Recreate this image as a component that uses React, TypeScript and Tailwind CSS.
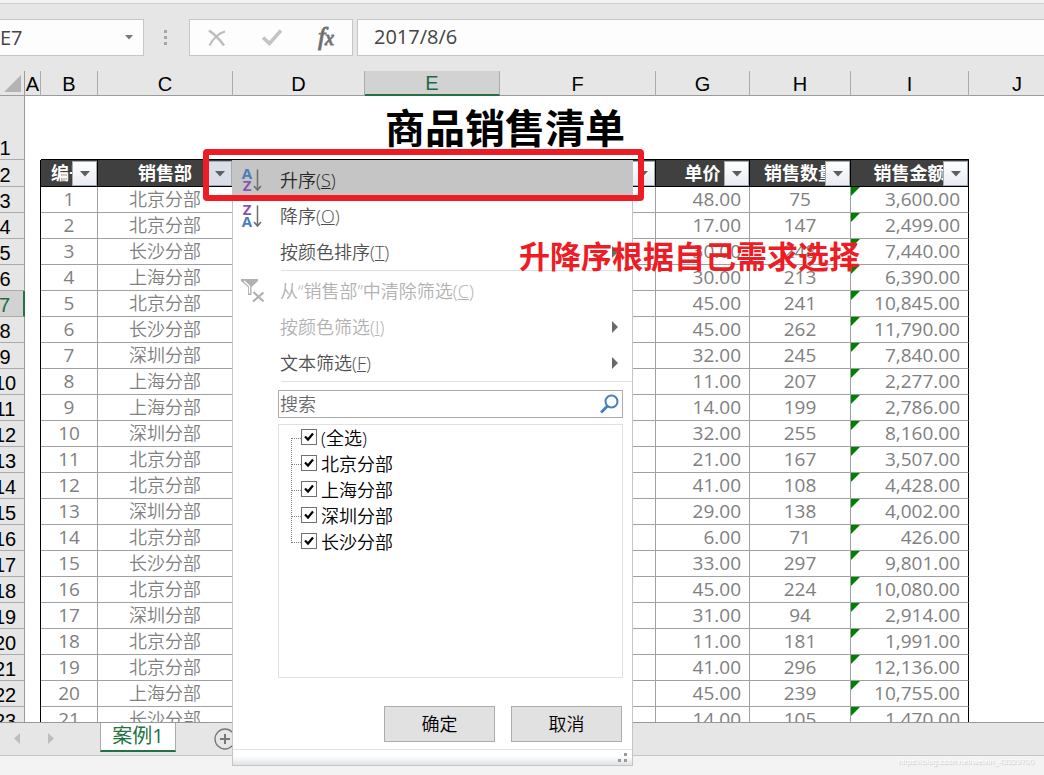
import { useState } from "react";
import type { ReactNode } from "react";
import clsx from "clsx";

type Row = {
  id: number;
  branch: string;
  price: string;
  qty: number;
  total: string;
};

const rows: Row[] = [
  { id: 1, branch: "北京分部", price: "48.00", qty: 75, total: "3,600.00" },
  { id: 2, branch: "北京分部", price: "17.00", qty: 147, total: "2,499.00" },
  { id: 3, branch: "长沙分部", price: "30.00", qty: 248, total: "7,440.00" },
  { id: 4, branch: "上海分部", price: "30.00", qty: 213, total: "6,390.00" },
  { id: 5, branch: "北京分部", price: "45.00", qty: 241, total: "10,845.00" },
  { id: 6, branch: "长沙分部", price: "45.00", qty: 262, total: "11,790.00" },
  { id: 7, branch: "深圳分部", price: "32.00", qty: 245, total: "7,840.00" },
  { id: 8, branch: "上海分部", price: "11.00", qty: 207, total: "2,277.00" },
  { id: 9, branch: "上海分部", price: "14.00", qty: 199, total: "2,786.00" },
  { id: 10, branch: "深圳分部", price: "32.00", qty: 255, total: "8,160.00" },
  { id: 11, branch: "北京分部", price: "21.00", qty: 167, total: "3,507.00" },
  { id: 12, branch: "北京分部", price: "41.00", qty: 108, total: "4,428.00" },
  { id: 13, branch: "深圳分部", price: "29.00", qty: 138, total: "4,002.00" },
  { id: 14, branch: "北京分部", price: "6.00", qty: 71, total: "426.00" },
  { id: 15, branch: "长沙分部", price: "33.00", qty: 297, total: "9,801.00" },
  { id: 16, branch: "北京分部", price: "45.00", qty: 224, total: "10,080.00" },
  { id: 17, branch: "深圳分部", price: "31.00", qty: 94, total: "2,914.00" },
  { id: 18, branch: "北京分部", price: "11.00", qty: 181, total: "1,991.00" },
  { id: 19, branch: "北京分部", price: "41.00", qty: 296, total: "12,136.00" },
  { id: 20, branch: "上海分部", price: "45.00", qty: 239, total: "10,755.00" },
  { id: 21, branch: "长沙分部", price: "14.00", qty: 105, total: "1,470.00" },
];

const columns = ["A", "B", "C", "D", "E", "F", "G", "H", "I", "J"];
const headers = ["编号", "销售部", "", "", "", "单价", "销售数量", "销售金额"];
const options = ["(全选)", "北京分部", "上海分部", "深圳分部", "长沙分部"];

const cell = "border-r border-b border-[#a0a0a0] p-0 pb-px";

function FilterButton({ label, active, onClick }: { label: string; active?: boolean; onClick?: () => void }) {
  return (
    <button
      type="button"
      aria-label={`筛选 ${label}`}
      onClick={onClick}
      className={clsx(
        "absolute right-0 top-px flex h-[25px] w-[25px] items-center justify-center border border-[#a3abb5]",
        active ? "bg-[#d9dee8]" : "bg-linear-to-b from-white to-[#e9ecf2]"
      )}
    >
      <svg width="10" height="6" viewBox="0 0 10 6">
        <path d="M0 0h10L5 5.5z" fill="#5f5f5f" />
      </svg>
    </button>
  );
}

function RowNumber({ n }: { n: number }) {
  return (
    <th
      scope="row"
      className={clsx(
        "h-[26px] border-b border-b-[#ababab] p-0 pt-[3px] font-['Liberation_Sans',sans-serif] text-xl leading-[22px] font-normal",
        n === 1 && "align-bottom",
        n === 7
          ? "border-r-2 border-r-[#217346] bg-[#d2d2d2] text-[#1e6b41]"
          : "border-r border-r-[#9b9b9b] bg-[#e6e6e6] text-black"
      )}
    >
      {n}
    </th>
  );
}

function SortIcon({ first, second }: { first: "A" | "Z"; second: "A" | "Z" }) {
  const color = { A: "#4a7ebb", Z: "#8a55b0" };
  return (
    <svg width="22" height="26" viewBox="0 0 22 26" fontFamily="Open Sans, sans-serif" fontWeight="700" fontSize="15">
      <text x="6" y="12" textAnchor="middle" fill={color[first]}>{first}</text>
      <text x="6" y="24" textAnchor="middle" fill={color[second]}>{second}</text>
      <path d="M16.500 2.500v20M13 19l3.500 4 3.500-4" fill="none" stroke="#6d6d6d" strokeWidth="1.500" />
    </svg>
  );
}

function ClearFilterIcon() {
  return (
    <svg width="24" height="24" viewBox="0 0 24 24">
      <path d="M0 0h17v2l-6.500 6v8H7V8L0 2z" fill="#b1b1b1" />
      <path d="M3 2l5.500 5v7.500" stroke="#fff" strokeWidth="1.200" fill="none" />
      <path d="M12.500 13l10 9.500M22.500 13.500l-10.500 9" stroke="#b1b1b1" strokeWidth="2.200" fill="none" />
    </svg>
  );
}

function MenuItem({
  icon,
  children,
  submenu,
  disabled,
  highlighted,
}: {
  icon?: ReactNode;
  children: ReactNode;
  submenu?: boolean;
  disabled?: boolean;
  highlighted?: boolean;
}) {
  return (
    <button
      type="button"
      role="menuitem"
      disabled={disabled}
      className={clsx(
        "flex w-full items-center pr-3.5 text-left text-lg leading-6",
        highlighted ? "h-[37px] bg-[#c5c5c5] text-[#262626]" : "h-9",
        !highlighted && (disabled ? "text-[#b1b1b1]" : "text-[#505050]")
      )}
    >
      <span className="flex w-[47px] shrink-0 pl-2">{icon}</span>
      <span className="flex-1">{children}</span>
      {submenu && (
        <svg width="6" height="12" viewBox="0 0 6 12">
          <path d="M0 0l6 6-6 6z" fill="#6a6a6a" />
        </svg>
      )}
    </button>
  );
}

function FilterMenu({ onClose }: { onClose: () => void }) {
  const [query, setQuery] = useState("");
  const [checked, setChecked] = useState<string[]>(options);

  const toggle = (name: string) => {
    if (name === options[0]) {
      setChecked(checked.includes(name) ? [] : options);
      return;
    }
    setChecked(checked.includes(name) ? checked.filter((c) => c !== name && c !== options[0]) : [...checked, name]);
  };

  return (
    <div className="absolute top-[160px] left-[232px] z-10 w-[401px] border border-[#c3c4c6] bg-white font-[350]">
      <div role="menu">
        <MenuItem highlighted icon={<SortIcon first="A" second="Z" />}>
          升序(<u>S</u>)
        </MenuItem>
        <MenuItem icon={<SortIcon first="Z" second="A" />}>
          降序(<u>O</u>)
        </MenuItem>
        <MenuItem submenu>
          按颜色排序(<u>T</u>)
        </MenuItem>
        <hr className="mb-0.5 ml-12 border-[#e0e1e3]" />
        <MenuItem disabled icon={<ClearFilterIcon />}>
          从“销售部”中清除筛选(<u>C</u>)
        </MenuItem>
        <MenuItem disabled submenu>
          按颜色筛选(<u>I</u>)
        </MenuItem>
        <MenuItem submenu>
          文本筛选(<u>F</u>)
        </MenuItem>
        <hr className="ml-12 border-[#e0e1e3]" />
      </div>

      <div className="mt-2 mr-[9px] ml-[45px] flex h-7 items-center border border-[#ababab] pr-[3px]">
        <input
          type="text"
          aria-label="搜索"
          placeholder="搜索"
          value={query}
          onChange={(e) => setQuery(e.target.value)}
          className="min-w-0 flex-1 pl-px text-lg leading-6 outline-none placeholder:text-[#6a6a6a]"
        />
        <svg width="19" height="20" viewBox="0 0 19 20" fill="none" stroke="#4a7ebb">
          <circle cx="11.500" cy="7.500" r="6" strokeWidth="2" />
          <path d="M7.500 12L1 18.500" strokeWidth="3" />
        </svg>
      </div>

      <div className="mt-1.5 mr-[9px] ml-[45px] h-[254px] border border-[#e0e1e4]">
        <ul className="relative pl-[13px]">
          <li aria-hidden="true" className="absolute top-[13px] left-3 h-[105px] border-l border-dotted border-[#808080]" />
          {options.map((name) => (
            <li key={name}>
              <label className="flex h-[26px] items-center text-lg leading-6 text-black">
                <span className="w-[9px] border-t border-dotted border-[#808080]" />
                <span className="mr-1 mb-0.5 grid h-4 w-4 place-items-center">
                  <input
                    type="checkbox"
                    checked={checked.includes(name)}
                    onChange={() => toggle(name)}
                    className="peer col-start-1 row-start-1 h-4 w-4 appearance-none border border-[#707070] bg-white"
                  />
                  <svg
                    width="10"
                    height="10"
                    viewBox="0 0 10 10"
                    className="pointer-events-none invisible col-start-1 row-start-1 peer-checked:visible"
                  >
                    <path d="M1 4.500L4 7.500 9 1.500" fill="none" stroke="#000" strokeWidth="2.200" />
                  </svg>
                </span>
                {name}
              </label>
            </li>
          ))}
        </ul>
      </div>

      <div className="mt-7 mr-2.5 flex justify-end gap-4">
        <button type="button" onClick={onClose} className="h-9 w-[111px] border border-[#adadad] bg-[#e1e1e1] text-lg leading-6 text-black">
          确定
        </button>
        <button type="button" onClick={onClose} className="h-9 w-[111px] border border-[#adadad] bg-[#e1e1e1] text-lg leading-6 text-black">
          取消
        </button>
      </div>

      <div className="mt-[7px] flex h-4 items-center justify-end border-t border-[#dbe5ee] bg-linear-to-b from-white from-40% to-[#dfe3e6] pr-1">
        <svg width="10" height="10" viewBox="0 0 10 10" fill="#9a9a9a">
          <path d="M6 0h3v3H6zM0 6h3v3H0zM6 6h3v3H6z" />
        </svg>
      </div>
    </div>
  );
}

function FormulaBar() {
  return (
    <div className="flex items-center bg-[#e6e6e6] py-[15px] text-xl text-[#444]">
      <div className="flex h-[37px] w-36 items-center border border-l-0 border-[#c6c6c6] bg-[#fdfdfd] pr-2.5">
        <input aria-label="名称框" defaultValue="E7" className="min-w-0 flex-1 outline-none" />
        <svg width="8" height="5" viewBox="0 0 8 5">
          <path d="M0 0h8L4 4.500z" fill="#777" />
        </svg>
      </div>
      <svg className="mx-5 shrink-0" width="5" height="16" viewBox="0 0 5 16" fill="#a6a6a6">
        <path d="M0 0h3v3H0zM0 6h3v3H0zM0 12h3v3H0z" />
      </svg>
      <div className="flex h-[37px] w-[164px] shrink-0 items-center justify-between border border-[#c6c6c6] bg-[#fdfdfd] px-[18px]">
        <button type="button" aria-label="取消输入">
          <svg width="18" height="18" viewBox="0 0 18 18" fill="none" stroke="#bdbdbd">
            <path d="M1 1.500C6 5 12 11 16 16.500" strokeWidth="2.600" />
            <path d="M17 2.500C11 4 5 10 1.500 16.500" strokeWidth="2" />
          </svg>
        </button>
        <button type="button" aria-label="输入">
          <svg width="20" height="17" viewBox="0 0 20 17" fill="none" stroke="#c4c4c4">
            <path d="M1 8.500l6.500 6L19 1.500" strokeWidth="3.600" />
          </svg>
        </button>
        <button
          type="button"
          aria-label="插入函数"
          className="pb-0.5 font-['Liberation_Serif',serif] text-[26px] leading-8 text-[#666] italic [-webkit-text-stroke:1px_#777]"
        >
          f<span className="text-xl">x</span>
        </button>
      </div>
      <input
        aria-label="编辑栏"
        defaultValue="2017/8/6"
        className="ml-1 h-[37px] min-w-0 flex-1 border border-r-0 border-[#c6c6c6] bg-[#fdfdfd] pb-0.5 pl-4 outline-none"
      />
    </div>
  );
}

function Sheet({ onFilter }: { onFilter: () => void }) {
  return (
    <div className="min-h-0 flex-1 overflow-hidden border-b border-[#999] bg-white">
      <table className="-ml-[14px] w-[calc(100%+14px)] table-fixed border-separate border-spacing-0">
        <colgroup>
          <col className="w-[39px]" />
          <col className="w-[16px]" />
          <col className="w-[57px]" />
          <col className="w-[135px]" />
          <col className="w-[132px]" />
          <col className="w-[135px]" />
          <col className="w-[156px]" />
          <col className="w-[94px]" />
          <col className="w-[101px]" />
          <col className="w-[118px]" />
          <col className="w-[97px]" />
          <col />
        </colgroup>
        <thead>
          <tr className="bg-[#e6e6e6] font-['Liberation_Sans',sans-serif] text-xl leading-[22px]">
            <th aria-label="全选" className="h-[25px] border-r border-b border-[#9b9b9b] p-0">
              <svg className="mr-[3px] ml-auto" width="17" height="17" viewBox="0 0 17 17">
                <path d="M17 0v17H0z" fill="#b4b4b4" />
              </svg>
            </th>
            {columns.map((c) => (
              <th
                key={c}
                scope="col"
                className={clsx(
                  "h-[25px] border-r border-r-[#ababab] p-0 pt-px font-normal",
                  c === "E"
                    ? "border-b-2 border-b-[#217346] bg-[#d2d2d2] text-[#1e6b41]"
                    : "border-b border-b-[#9b9b9b] text-black"
                )}
              >
                {c}
              </th>
            ))}
            <th className="border-b border-[#9b9b9b] p-0" />
          </tr>
        </thead>
        <tbody className="text-lg leading-6 text-[#808080]">
          <tr className="h-16">
            <RowNumber n={1} />
            <td />
            <td colSpan={8} className="border-b border-black p-0 text-center text-[40px] leading-[60px] font-bold text-black">
              商品销售清单
            </td>
          </tr>
          <tr>
            <RowNumber n={2} />
            <td className="border-r border-black p-0" />
            {headers.map((h, i) => (
              <th key={i} scope="col" className="h-[27px] border-r border-b border-black bg-[#404040] p-0 font-bold text-white">
                <div className="relative h-[26px] overflow-hidden leading-[26px] whitespace-nowrap">
                  {h}
                  <FilterButton label={h} active={i === 1} onClick={i === 1 ? onFilter : undefined} />
                </div>
              </th>
            ))}
          </tr>
          {rows.map((r) => (
            <tr key={r.id}>
              <RowNumber n={r.id + 2} />
              <td className="border-r border-black p-0" />
              <td className={clsx(cell, "text-center text-[19px]")}>{r.id}</td>
              <td className={clsx(cell, "text-center font-[350]")}>{r.branch}</td>
              <td className={cell} />
              <td className={cell} />
              <td className={cell} />
              <td className={clsx(cell, "pr-2 text-right text-[19px]")}>{r.price}</td>
              <td className={clsx(cell, "text-center text-[19px]")}>{r.qty}</td>
              <td className="border-r border-b border-r-black border-b-[#a0a0a0] p-0 pb-px text-[19px]">
                <div className="flex justify-between pr-2">
                  <svg width="9" height="9" viewBox="0 0 9 9">
                    <path d="M0 0h9L0 9z" fill="#008000" />
                  </svg>
                  {r.total}
                </div>
              </td>
            </tr>
          ))}
        </tbody>
      </table>
    </div>
  );
}

function SheetTabs() {
  return (
    <div className="flex h-[33px] shrink-0 items-start border-b border-[#c6c6c6] bg-[#e6e6e6] pl-3.5">
      <div className="flex h-[31px] w-[86px] items-center gap-7">
        <button type="button" aria-label="上一个工作表">
          <svg width="6" height="11" viewBox="0 0 6 11">
            <path d="M6 0v11L0 5.500z" fill="#bdbdbd" />
          </svg>
        </button>
        <button type="button" aria-label="下一个工作表">
          <svg width="6" height="11" viewBox="0 0 6 11">
            <path d="M0 0v11l6-5.500z" fill="#bdbdbd" />
          </svg>
        </button>
      </div>
      <button
        type="button"
        className="h-[29px] w-[76px] border-x border-b-2 border-x-[#ababab] border-b-[#217346] bg-white pb-0.5 text-xl leading-6 text-[#217346]"
      >
        案例1
      </button>
      <button type="button" aria-label="新工作表" className="mt-[5px] ml-[38px]">
        <svg width="22" height="22" viewBox="0 0 22 22" fill="none" stroke="#777">
          <circle cx="11" cy="11" r="10" strokeWidth="1.300" />
          <path d="M11 6v10M6 11h10" strokeWidth="2" />
        </svg>
      </button>
    </div>
  );
}

export default function App() {
  const [open, setOpen] = useState(true);

  return (
    <main className="relative flex h-screen flex-col overflow-hidden bg-[#f3f3f3] font-['Open_Sans','Noto_Sans_CJK_SC',sans-serif]">
      <div className="h-1 shrink-0 border-b border-[#d0d0d0]" />
      <FormulaBar />
      <Sheet onFilter={() => setOpen(!open)} />
      <SheetTabs />
      <footer className="h-[19px] shrink-0 pr-2.5 text-right font-['Liberation_Sans',sans-serif] text-[8px] leading-3 text-white [text-shadow:1px_1px_1px_#c0c0c0]">
        https://blog.csdn.net/weixin_43329700
      </footer>

      {open && <FilterMenu onClose={() => setOpen(false)} />}

      {/* Tutorial callout */}
      <div className="pointer-events-none absolute top-[149px] left-[203px] z-20 h-[52px] w-[441px] rounded border-[6px] border-[#ee1c25]" />
      <p className="pointer-events-none absolute top-[236px] left-[519px] z-20 text-[31px] leading-10 font-bold whitespace-nowrap text-[#ee1c25]">
        升降序根据自己需求选择
      </p>
    </main>
  );
}
